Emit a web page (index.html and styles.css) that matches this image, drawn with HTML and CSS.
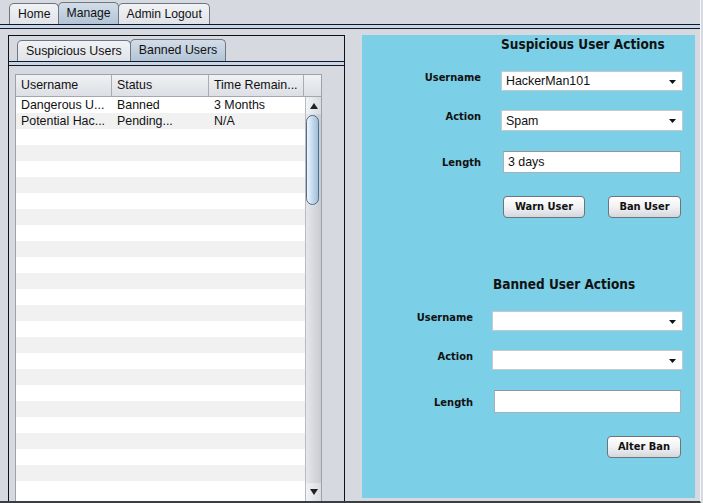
FILE: index.html
```html
<!DOCTYPE html>
<html>
<head>
<meta charset="utf-8">
<link rel="stylesheet" href="styles.css">
</head>
<body>
<div class="window">
  <div class="tabs top-tabs">
    <div class="tab">Home</div>
    <div class="tab selected">Manage</div>
    <div class="tab">Admin Logout</div>
  </div>
  <div class="tab-rule"></div>
  <div class="content">
    <div class="left-panel">
      <div class="tabs inner-tabs">
        <div class="tab">Suspicious Users</div>
        <div class="tab selected">Banned Users</div>
      </div>
      <div class="tab-rule"></div>
      <div class="table">
        <div class="thead">
          <div class="th c1">Username</div>
          <div class="th c2">Status</div>
          <div class="th c3">Time Remain...</div>
          <div class="th corner"></div>
        </div>
        <div class="tbody">
          <div class="rows" id="rows">
            <div class="row"><span class="c1">Dangerous U...</span><span class="c2">Banned</span><span class="c3">3 Months</span></div>
            <div class="row"><span class="c1">Potential Hac...</span><span class="c2">Pending...</span><span class="c3">N/A</span></div>
            <div class="row"></div><div class="row"></div><div class="row"></div><div class="row"></div>
            <div class="row"></div><div class="row"></div><div class="row"></div><div class="row"></div>
            <div class="row"></div><div class="row"></div><div class="row"></div><div class="row"></div>
            <div class="row"></div><div class="row"></div><div class="row"></div><div class="row"></div>
            <div class="row"></div><div class="row"></div><div class="row"></div><div class="row"></div>
            <div class="row"></div><div class="row"></div><div class="row"></div>
          </div>
          <div class="scrollbar">
            <div class="arrow up"><svg width="8" height="6" viewBox="0 0 8 6"><path d="M4 0L8 6H0Z" fill="#222"/></svg></div>
            <div class="track">
              <div class="thumb"></div>
            </div>
            <div class="arrow down"><svg width="8" height="6" viewBox="0 0 8 6"><path d="M0 0H8L4 6Z" fill="#222"/></svg></div>
          </div>
        </div>
      </div>
    </div>
    <div class="right-panel">
      <div class="title t1">Suspicious User Actions</div>
      <div class="frow r1">
        <div class="label lw1 up">Username</div>
        <div class="combo cw1"><span>HackerMan101</span><svg width="7" height="4" viewBox="0 0 7 4"><path d="M0 0H7L3.5 4Z" fill="#111"/></svg></div>
      </div>
      <div class="frow r2">
        <div class="label lw1 up">Action</div>
        <div class="combo cw1 tall"><span>Spam</span><svg width="7" height="4" viewBox="0 0 7 4"><path d="M0 0H7L3.5 4Z" fill="#111"/></svg></div>
      </div>
      <div class="frow r3">
        <div class="label lw1">Length</div>
        <div class="field fw1">3 days</div>
      </div>
      <div class="frow r4">
        <div class="btn warn">Warn User</div>
        <div class="btn ban">Ban User</div>
      </div>
      <div class="title t2">Banned User Actions</div>
      <div class="frow r5">
        <div class="label lw2 up">Username</div>
        <div class="combo cw2"><span></span><svg width="7" height="4" viewBox="0 0 7 4"><path d="M0 0H7L3.5 4Z" fill="#111"/></svg></div>
      </div>
      <div class="frow r6">
        <div class="label lw2 up">Action</div>
        <div class="combo cw2"><span></span><svg width="7" height="4" viewBox="0 0 7 4"><path d="M0 0H7L3.5 4Z" fill="#111"/></svg></div>
      </div>
      <div class="frow r7">
        <div class="label lw2">Length</div>
        <div class="field fw2"></div>
      </div>
      <div class="frow r8">
        <div class="btn alter">Alter Ban</div>
      </div>
    </div>
  </div>
</div>
</body>
</html>
```
FILE: styles.css
```css
html, body {
  margin: 0;
  padding: 0;
}
body {
  background: #d6d9df;
  font-family: "Liberation Sans", Arial, sans-serif;
  font-size: 12px;
  color: #111;
  width: 703px;
  height: 503px;
  overflow: hidden;
}
.window {
  width: 700px;
  height: 501px;
  border-right: 1px solid #f4f6f8;
  border-bottom: 2px solid #3a3d42;
  display: flex;
  flex-direction: column;
}
.tabs {
  display: flex;
  align-items: flex-end;
}
.top-tabs {
  padding-left: 9px;
  height: 24px;
}
.top-tabs .tab {
  font-size: 12.2px;
  padding: 0 7px 0 8px;
}
.tab {
  height: 21px;
  box-sizing: border-box;
  border: 1px solid #6f7683;
  border-bottom: none;
  border-radius: 5px 5px 0 0;
  background: linear-gradient(#f1f2f5, #e0e3e8);
  padding: 0 8px;
  line-height: 21px;
  font-size: 12.4px;
  color: #111;
}
.tab + .tab {
  margin-left: -1px;
}
.tab.selected {
  height: 22px;
  background: linear-gradient(#d3dde8, #b2c4d6);
}
.tab-rule {
  height: 3px;
  border-top: 1px solid #10192a;
  border-bottom: 1px solid #10192a;
  background: #c9d5e4;
}
.content {
  flex: 1;
  display: flex;
  padding: 6px 0 0 8px;
  gap: 17px;
  min-height: 0;
}
.left-panel {
  width: 335px;
  border: 1px solid #111;
  border-bottom: none;
  display: flex;
  flex-direction: column;
}
.inner-tabs {
  padding-left: 8px;
  height: 25px;
}
.table {
  margin: 8px 0 0 6px;
  width: 305px;
  flex: 1;
  border: 1px solid #9da3ab;
  border-bottom: none;
  display: flex;
  flex-direction: column;
  min-height: 0;
  background: #fff;
}
.thead {
  display: flex;
  height: 21px;
  background: linear-gradient(#f0f1f4, #dcdfe4);
  border-bottom: 1px solid #a2a8b0;
}
.th {
  box-sizing: border-box;
  padding-left: 5px;
  line-height: 21px;
  border-right: 1px solid #a8adb5;
  font-size: 12.4px;
}
.c1 { width: 96px; }
.c2 { width: 97px; }
.c3 { width: 95px; }
.th.corner { width: 15px; border-right: none; }
.tbody {
  flex: 1;
  display: flex;
  min-height: 0;
  overflow: hidden;
}
.rows {
  width: 289px;
}
.row {
  height: 16px;
  display: flex;
  line-height: 16px;
  font-size: 12.4px;
}
.row:nth-child(even) {
  background: #f1f1f1;
}
.row span {
  box-sizing: border-box;
  padding-left: 5px;
  white-space: nowrap;
}
.scrollbar {
  width: 15px;
  display: flex;
  flex-direction: column;
  background: linear-gradient(90deg, #e6e7ea, #c8cbd0);
  border-left: 1px solid #b8bcc2;
}
.arrow {
  height: 17px;
  display: flex;
  align-items: center;
  justify-content: center;
  background: linear-gradient(90deg, #f2f3f5, #d8dbe0);
}
.arrow.down {
  height: 18px;
}
.track {
  flex: 1;
  padding-top: 1px;
}
.thumb {
  height: 90px;
  width: 13px;
  box-sizing: border-box;
  border: 1px solid #4f6f8a;
  border-radius: 7px;
  background: linear-gradient(90deg, #eef5fb, #bcd5ea 60%, #9fbfdc);
}
.right-panel {
  width: 333px;
  background: #7bcfe6;
  display: flex;
  flex-direction: column;
  margin-bottom: 3px;
}
.title {
  font-family: "DejaVu Sans Condensed", "DejaVu Sans", sans-serif;
  font-stretch: condensed;
  font-weight: bold;
  font-size: 13.5px;
  height: 18px;
  line-height: 18px;
  color: #111;
}
.t1 { margin-left: 139px; }
.t2 { margin-left: 131px; margin-top: 57px; }
.frow {
  display: flex;
  align-items: center;
}
.label {
  font-family: "DejaVu Sans Condensed", "DejaVu Sans", sans-serif;
  font-stretch: condensed;
  font-weight: bold;
  font-size: 11px;
  text-align: right;
  color: #111;
}
.label.up {
  align-self: flex-start;
  margin-top: 0;
}
.lw1 { width: 119px; margin-right: 20px; }
.lw2 { width: 111px; margin-right: 19px; }
.r3 .lw1 { margin-right: 22px; }
.r7 .lw2 { margin-right: 21px; }
.r3 .label, .r7 .label { margin-top: 1px; }
.r7 .label { margin-top: 2px; }
.r1 { margin-top: 18px; }
.r2 { margin-top: 19px; }
.r3 { margin-top: 20px; }
.r4 { margin-top: 23px; }
.r5 { margin-top: 18px; }
.r6 { margin-top: 19px; }
.r7 { margin-top: 20px; }
.r8 { margin-top: 23px; justify-content: flex-start; }
.combo {
  height: 20px;
  box-sizing: border-box;
  background: #fff;
  border: 1px solid #c3c9d0;
  display: flex;
  align-items: center;
  justify-content: space-between;
  padding: 0 6px 0 4px;
  font-size: 12.4px;
}
.combo.tall { height: 21px; }
.combo svg { margin-top: 1px; }
.cw1 { width: 182px; }
.cw2 { width: 191px; }
.field {
  height: 22px;
  box-sizing: border-box;
  background: #fff;
  border: 1px solid #a9afb6;
  border-top-color: #8f959c;
  padding-left: 4px;
  line-height: 20px;
  font-size: 12.4px;
}
.fw1 { width: 178px; }
.fw2 { width: 187px; height: 23px; }
.btn {
  height: 22px;
  box-sizing: border-box;
  border: 1px solid #6e747b;
  border-radius: 4px;
  background: linear-gradient(#ffffff, #f1f2f4 50%, #d4d7dc);
  font-family: "DejaVu Sans Condensed", "DejaVu Sans", sans-serif;
  font-stretch: condensed;
  font-weight: bold;
  font-size: 11px;
  line-height: 20px;
  text-align: center;
  color: #111;
}
.warn { margin-left: 141px; width: 82px; }
.ban { margin-left: 23px; width: 73px; }
.alter { margin-left: 245px; width: 74px; }
```
